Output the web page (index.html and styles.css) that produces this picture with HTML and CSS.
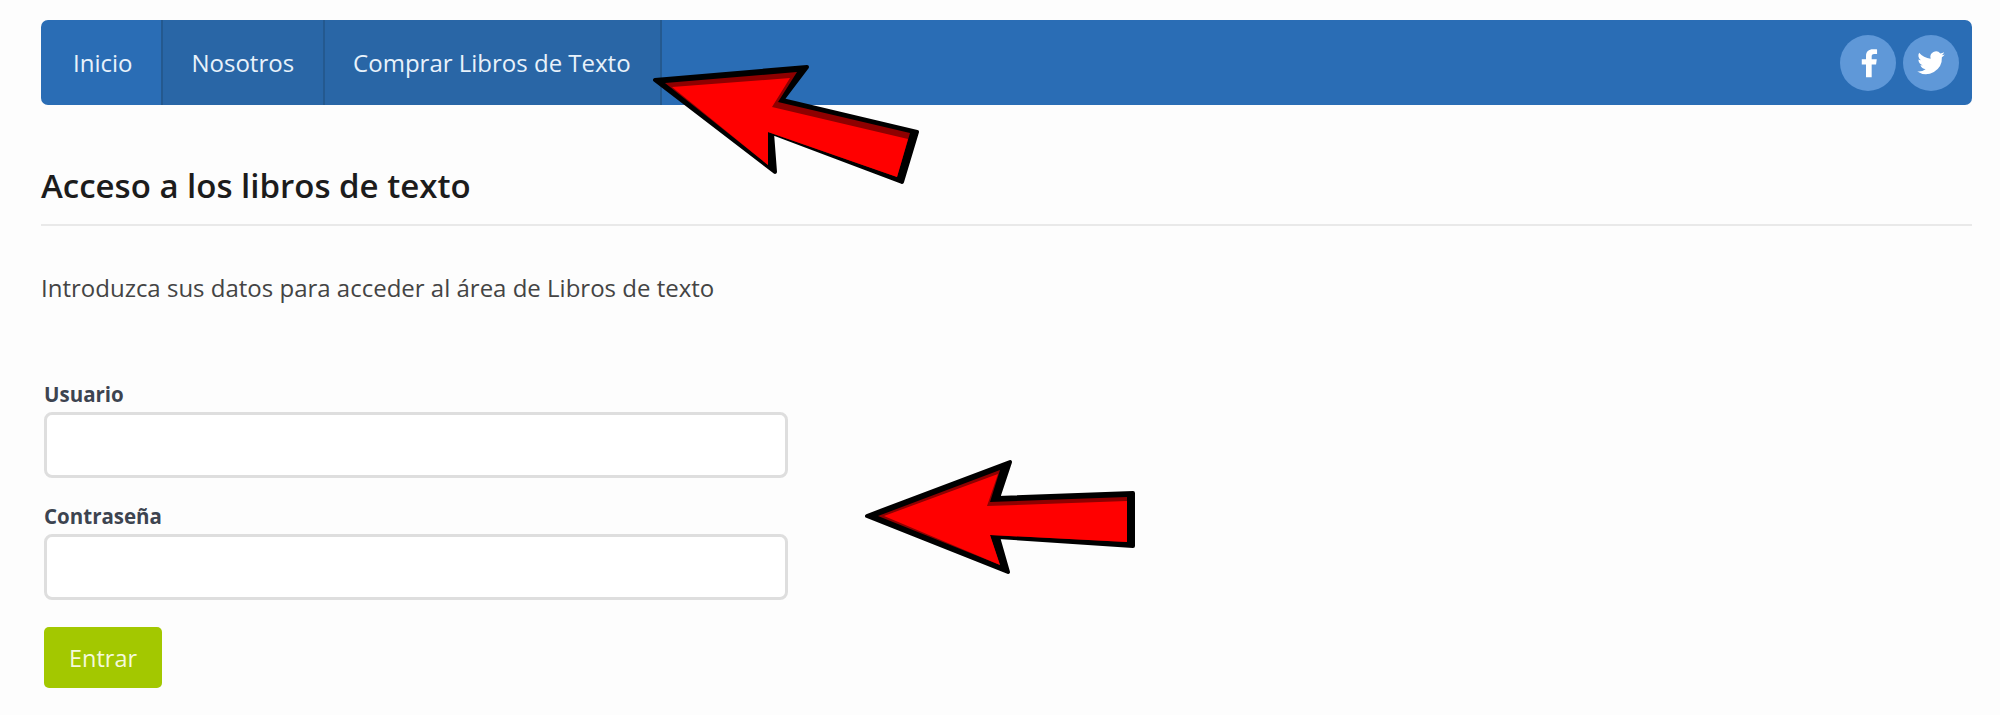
FILE: index.html
```html
<!DOCTYPE html>
<html>
<head>
    <title>Acceso a los libros de texto</title>
    <link rel="stylesheet" href="styles.css">
</head>
<body>
    <nav class="navbar">
        <a class="tab" href="#">Inicio</a>
        <a class="tab tab-dark" href="#">Nosotros</a>
        <a class="tab tab-dark" href="#">Comprar Libros de Texto</a>
        <div class="social">
            <a class="social-btn" href="#">
                <svg viewBox="0 0 24 24" width="34" height="34"><path fill="#fff" d="M14.6 22v-9h3.100l.5-3.700h-3.600V7.300c0-1 .3-1.700 1.800-1.700h2V2.400c-.3 0-1.500-.1-2.900-.1-2.900 0-4.900 1.600-4.900 4.600v2.400H7.600V13h3v9z"/></svg>
            </a>
            <a class="social-btn" href="#">
                <svg viewBox="0 0 24 24" width="30" height="30"><path fill="#fff" d="M23 5.1c-.8.4-1.7.6-2.6.7.9-.6 1.7-1.4 2-2.5-.9.5-1.9.9-2.9 1.1a4.5 4.5 0 0 0-7.8 4.1C8 8.300 4.700 6.500 2.500 3.800a4.500 4.500 0 0 0 1.400 6c-.7 0-1.400-.2-2-.6 0 2.200 1.500 4.100 3.600 4.500-.7.200-1.400.2-2 .1.600 1.800 2.300 3.100 4.200 3.100A9.100 9.100 0 0 1 1 18.800 12.800 12.800 0 0 0 20.700 7.400c.9-.6 1.700-1.400 2.300-2.300z"/></svg>
            </a>
        </div>
    </nav>

    <h1 class="page-title">Acceso a los libros de texto</h1>
    <p class="intro">Introduzca sus datos para acceder al área de Libros de texto</p>

    <form class="login-form">
        <label for="usuario">Usuario</label>
        <input id="usuario" type="text">
        <label for="clave">Contraseña</label>
        <input id="clave" type="password">
        <button type="button">Entrar</button>
    </form>

    <!-- flechas rojas encima de la captura -->
    <svg class="arrows" viewBox="0 0 2000 715" width="2000" height="715">
        <polygon class="arrow-line" points="655,80 807,67 782,100 917,132 902,182 772,133 775,172"/>
        <polygon class="arrow-shade" points="665,83 797,72 778,102 910,133 897,177 768,132 768,165"/>
        <polygon class="arrow-fill" points="672,87 790,78 772,107 908,139 897,177 768,132 768,165"/>
        <polygon class="arrow-line" points="867,516 1010,462 998,498 1133,493 1133,546 998,537 1008,572"/>
        <polygon class="arrow-shade" points="878,516 1000,470 990,502 1127,497 1127,542 990,535 1000,565"/>
        <polygon class="arrow-fill" points="884,516 998,474 987,506 1127,501 1127,542 990,535 1000,565"/>
    </svg>
</body>
</html>
```

FILE: styles.css
```css
html, body {
    margin: 0;
    height: 715px;
    overflow: hidden;
}
body {
    position: relative;
    box-sizing: border-box;
    padding: 20px 28px 0 41px;
    background: #fdfdfd;
    color: #444;
    font-family: "Open Sans", "Noto Sans", sans-serif;
}
.navbar {
    display: flex;
    height: 85px;
    background: #2a6db5;
    border-radius: 7px;
    overflow: hidden;
}
.tab {
    display: flex;
    align-items: center;
    padding: 0 29px 0 28px;
    color: #e8f2fb;
    font-size: 24px;
    text-decoration: none;
    border-right: 2px solid #24598f;
}
.tab:first-child {
    padding-left: 32px;
}
.tab-dark {
    background: #2966a6;
}
.social {
    display: flex;
    align-items: center;
    gap: 7px;
    margin-left: auto;
    padding-right: 13px;
}
.social-btn {
    display: flex;
    align-items: center;
    justify-content: center;
    width: 56px;
    height: 56px;
    border-radius: 50%;
    background: #5f98d8;
}
.page-title {
    margin: 61px 0 0;
    padding-bottom: 18px;
    border-bottom: 2px solid #e9e9e9;
    color: #1c1c1c;
    font-size: 33px;
    font-weight: 600;
    line-height: 40px;
}
.intro {
    margin: 47px 0 0;
    font-size: 24px;
    line-height: 30px;
}
.login-form {
    display: flex;
    flex-direction: column;
    align-items: flex-start;
    margin: 78px 0 0 3px;
}
.login-form label {
    margin-bottom: 5px;
    color: #3d4450;
    font-size: 20.500px;
    font-weight: 700;
    line-height: 26px;
}
.login-form input {
    box-sizing: border-box;
    width: 744px;
    height: 66px;
    margin-bottom: 25px;
    background: #fff;
    border: 3px solid #dedede;
    border-radius: 8px;
}
.login-form button {
    width: 118px;
    height: 61px;
    margin-top: 2px;
    background: #a3c800;
    border: none;
    border-radius: 5px;
    color: #f4f9dc;
    font-family: inherit;
    font-size: 23.500px;
}
.arrows {
    position: absolute;
    top: 0;
    left: 0;
    pointer-events: none;
}
.arrow-line {
    fill: #000;
    stroke: #000;
    stroke-width: 4;
    stroke-linejoin: round;
}
.arrow-shade {
    fill: #8e0000;
}
.arrow-fill {
    fill: #f00;
}
```
